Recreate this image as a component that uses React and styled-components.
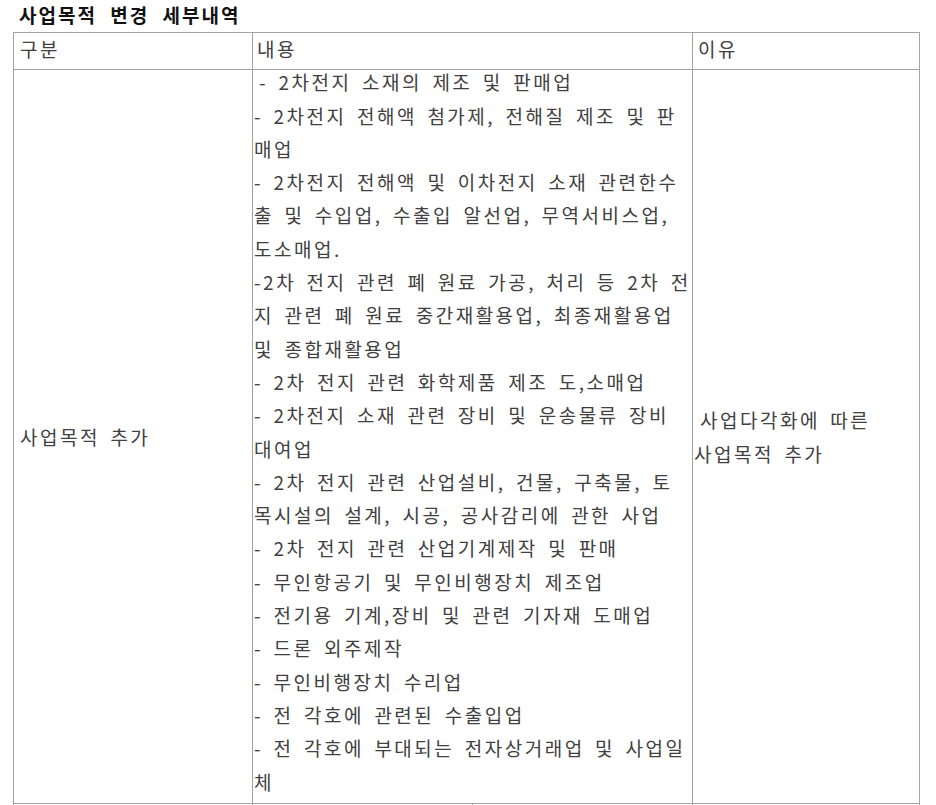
import styled, { createGlobalStyle } from "styled-components";

const GlobalStyle = createGlobalStyle`
  html, body {
    margin: 0;
    padding: 0;
    background: #ffffff;
  }
  body {
    font-family: "Noto Sans CJK KR", "Noto Sans", sans-serif;
    color: #333333;
  }
`;

const Page = styled.div`
  padding: 0 0 0 13px;
  width: 936px;
  height: 805px;
  overflow: hidden;
  box-sizing: border-box;
`;

const Title = styled.h2`
  margin: 0 0 4px;
  padding: 3px 0 1px 6px;
  font-size: 19px;
  line-height: 24px;
  font-weight: 700;
  letter-spacing: 2px;
  word-spacing: 7px;
  color: #111111;
`;

const Table = styled.table`
  width: 906px;
  border-collapse: collapse;
  table-layout: fixed;
  font-size: 19px;
  letter-spacing: 2.5px;
  word-spacing: 3.7px;
  color: #404040;
`;

const Cell = styled.td`
  border: 1px solid #a3a3a3;
  padding: ${(p) => p.$pad || "0"};
  line-height: 33.3px;
  vertical-align: ${(p) => (p.$middle ? "middle" : "top")};
  white-space: nowrap;
`;

const HeadCell = styled(Cell)`
  padding-top: 0;
  padding-bottom: 5px;
  line-height: 31.3px;
`;

const Lines = styled.div`
  margin: -5px 0 5px;
`;

const Line = styled.div`
  padding-left: ${(p) => p.$indent || 0}px;
`;

const EmptyCell = styled.td`
  border: 1px solid #a3a3a3;
  height: 40px;
`;

const items = [
  { text: "- 2차전지 소재의 제조 및 판매업", indent: 5 },
  { text: "- 2차전지 전해액 첨가제, 전해질 제조 및 판" },
  { text: "매업" },
  { text: "- 2차전지 전해액 및 이차전지 소재 관련한수" },
  { text: "출 및 수입업, 수출입 알선업, 무역서비스업," },
  { text: "도소매업." },
  { text: "-2차 전지 관련 폐 원료 가공, 처리 등 2차 전" },
  { text: "지 관련 폐 원료 중간재활용업, 최종재활용업" },
  { text: "및 종합재활용업" },
  { text: "- 2차 전지 관련 화학제품 제조 도,소매업" },
  { text: "- 2차전지 소재 관련 장비 및 운송물류 장비" },
  { text: "대여업" },
  { text: "- 2차 전지 관련 산업설비, 건물, 구축물, 토" },
  { text: "목시설의 설계, 시공, 공사감리에 관한 사업" },
  { text: "- 2차 전지 관련 산업기계제작 및 판매" },
  { text: "- 무인항공기 및 무인비행장치 제조업" },
  { text: "- 전기용 기계,장비 및 관련 기자재 도매업" },
  { text: "- 드론 외주제작" },
  { text: "- 무인비행장치 수리업" },
  { text: "- 전 각호에 관련된 수출입업" },
  { text: "- 전 각호에 부대되는 전자상거래업 및 사업일" },
  { text: "체" },
];

export default function App() {
  return (
    <>
      <GlobalStyle />
      <Page>
        <Title>사업목적 변경 세부내역</Title>
        <Table>
          <colgroup>
            <col style={{ width: 239 }} />
            <col style={{ width: 220 }} />
            <col style={{ width: 220 }} />
            <col style={{ width: 227 }} />
          </colgroup>
          <tbody>
            <tr>
              <HeadCell $pad="0 0 0 6px">구분</HeadCell>
              <HeadCell colSpan={2} $pad="0 0 0 4px">내용</HeadCell>
              <HeadCell $pad="0 0 0 5px">이유</HeadCell>
            </tr>
            <tr>
              <Cell $middle $pad="0 0 0 6px">사업목적 추가</Cell>
              <Cell colSpan={2} $pad="0 0 0 1px">
                <Lines>
                  {items.map((item, i) => (
                    <Line key={i} $indent={item.indent}>{item.text}</Line>
                  ))}
                </Lines>
              </Cell>
              <Cell $middle $pad="0 0 0 1px">
                <Line $indent={6}>사업다각화에 따른</Line>
                <Line>사업목적 추가</Line>
              </Cell>
            </tr>
            <tr>
              <EmptyCell />
              <EmptyCell />
              <EmptyCell />
              <EmptyCell />
            </tr>
          </tbody>
        </Table>
      </Page>
    </>
  );
}
